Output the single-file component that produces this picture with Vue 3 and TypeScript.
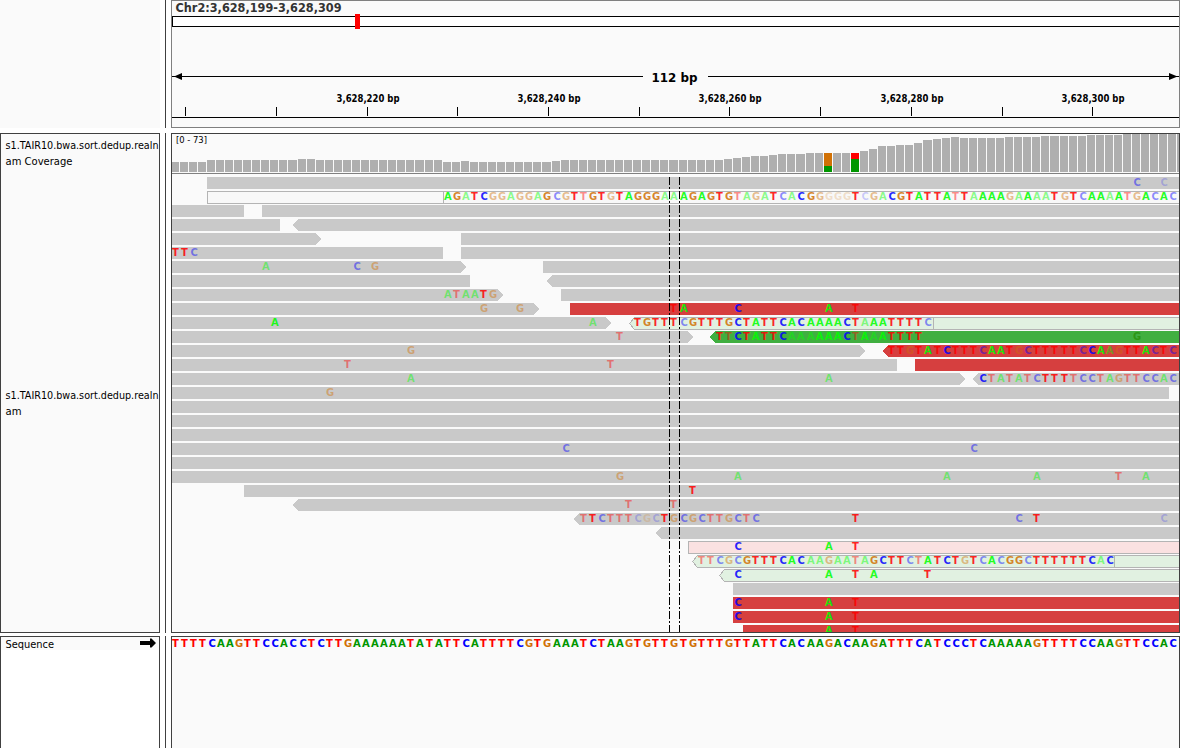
<script setup lang="ts">
type Tone = 'gray' | 'red' | 'green' | 'paleRed' | 'paleGreen' | 'blank'
type Cap = 'left' | 'right' | 'none'

interface Segment {
  from: number
  to: number
  tone: Tone
  cap: Cap
  divider?: number
}

interface BaseRun {
  start: number
  bases: string
  quality: string
}

interface ReadRow {
  segments: Segment[]
  runs: BaseRun[]
}

const LEFT = 171
const RIGHT = 1179
const BASE_WIDTH = 9.072

const seg = (from: number, to: number, tone: Tone = 'gray', cap: Cap = 'none', divider?: number): Segment => ({
  from, to, tone, cap, divider,
})
const run = (start: number, bases: string, quality: string): BaseRun => ({ start, bases, quality })
const row = (segments: Segment[], runs: BaseRun[] = []): ReadRow => ({ segments, runs })

const baseX = (index: number): number => Math.floor(LEFT + index * BASE_WIDTH)

const toneFill: Record<Tone, string> = {
  gray: '#c9c9c9',
  red: '#d63f3f',
  green: '#40af40',
  paleRed: '#fae1e1',
  paleGreen: '#e1f1e1',
  blank: '#f8f8f8',
}
const isOutlined = (tone: Tone): boolean => tone === 'paleRed' || tone === 'paleGreen' || tone === 'blank'

/* Read rows from top to bottom; long mismatch stretches are split every ten bases. */
const rows: ReadRow[] = [
  row([seg(207, RIGHT)], [run(106, 'C', '2'), run(109, 'C', '1')]),
  row([seg(207, RIGHT + 4, 'blank', 'none', 443)], [
    run(30, 'AGATCGGAGG', '3323322222'),
    run(40, 'AGCGTTGTGT', '2322323323'),
    run(50, 'AGGGAAAGAG', '3333223333'),
    run(60, 'TGTAGATCAC', '3322223223'),
    run(70, 'GGGGGTCGAC', '3211131223'),
    run(80, 'GTATTATTAA', '3333332323'),
    run(90, 'AAGAAAATGT', '3322322323'),
    run(100, 'CAAAATGACA', '2332322323'),
    run(110, 'C', '2'),
  ]),
  row([seg(172, 244), seg(262, RIGHT)]),
  row([seg(172, 280), seg(293, RIGHT, 'gray', 'left')]),
  row([seg(172, 321, 'gray', 'right'), seg(461, RIGHT)]),
  row([seg(172, 443), seg(461, RIGHT)], [run(0, 'TTC', '332')]),
  row([seg(172, 466, 'gray', 'right'), seg(543, RIGHT)], [run(10, 'A', '2'), run(20, 'C', '2'), run(22, 'G', '2')]),
  row([seg(172, 470), seg(547, RIGHT, 'gray', 'left')]),
  row([seg(172, 503, 'gray', 'right'), seg(561, RIGHT)], [run(30, 'ATAATG', '222232')]),
  row([seg(172, 539, 'gray', 'right'), seg(570, RIGHT, 'red')], [
    run(34, 'G', '2'), run(38, 'G', '2'), run(55, 'TA', '33'), run(62, 'C', '3'), run(72, 'A', '3'), run(75, 'T', '3'),
  ]),
  row([seg(172, 611, 'gray', 'right'), seg(629, RIGHT + 4, 'paleGreen', 'left', 933)], [
    run(11, 'A', '3'), run(46, 'A', '2'),
    run(51, 'TGTTTCGTTT', '3333323333'), run(61, 'GCTATTCACA', '3333333333'),
    run(71, 'AAACTAAATT', '3333323333'), run(81, 'TTC', '332'),
  ]),
  row([seg(172, 693, 'gray', 'right'), seg(710, RIGHT, 'green', 'left')], [
    run(49, 'T', '2'), run(60, 'TTCTATTCAAAAAACTAAATTTT', '32333333222333323233333'), run(106, 'G', '5'),
  ]),
  row([seg(172, 865, 'gray', 'right'), seg(883, RIGHT, 'red', 'left')], [
    run(26, 'G', '2'),
    run(79, 'TTGTATCTTT', '3323333333'), run(89, 'CAATGCTTTT', '2333223333'),
    run(99, 'TCCAAGTTAC', '3233223332'), run(109, 'TC', '32'),
  ]),
  row([seg(172, 897), seg(915, RIGHT, 'red')], [run(19, 'T', '2'), run(48, 'T', '2')]),
  row([seg(172, 965, 'gray', 'right'), seg(973, RIGHT, 'gray', 'left')], [
    run(26, 'A', '2'), run(72, 'A', '2'), run(89, 'CTATATCTTTTCCTAGTTCCAC', '3222222333222222222222'),
  ]),
  row([seg(172, 1169)], [run(17, 'G', '2')]),
  row([seg(172, RIGHT)]),
  row([seg(172, RIGHT)]),
  row([seg(172, RIGHT)]),
  row([seg(172, RIGHT)], [run(43, 'C', '2'), run(88, 'C', '2')]),
  row([seg(172, RIGHT)]),
  row([seg(172, RIGHT)], [
    run(49, 'G', '2'), run(62, 'A', '2'), run(85, 'A', '2'), run(95, 'A', '2'), run(104, 'T', '2'), run(107, 'A', '2'),
  ]),
  row([seg(244, RIGHT)], [run(57, 'T', '3')]),
  row([seg(293, RIGHT, 'gray', 'left')], [run(50, 'T', '2'), run(55, 'T', '2')]),
  row([seg(574, RIGHT, 'gray', 'left')], [
    run(45, 'TTCTTTCGCT', '2322221113'), run(55, 'GCGCTTGCTC', '2222222222'),
    run(75, 'T', '3'), run(93, 'C', '2'), run(95, 'T', '3'), run(109, 'C', '1'),
  ]),
  row([seg(656, RIGHT, 'gray', 'left')]),
  row([seg(688, RIGHT + 4, 'paleRed')], [run(62, 'C', '3'), run(72, 'A', '3'), run(75, 'T', '3')]),
  row([seg(692, RIGHT + 4, 'paleGreen', 'left', 1114)], [
    run(58, 'TTCGCGTTTC', '2222233333'), run(68, 'ACAAGAATAG', '3322222223'),
    run(78, 'CTTCTATCTG', '3332233332'), run(88, 'TCACGGCTTT', '3232332333'), run(98, 'TTTCAC', '333323'),
  ]),
  row([seg(719, RIGHT + 4, 'paleGreen', 'left')], [
    run(62, 'C', '3'), run(72, 'A', '3'), run(75, 'T', '3'), run(77, 'A', '3'), run(83, 'T', '3'),
  ]),
  row([seg(733, RIGHT)]),
  row([seg(733, RIGHT, 'red')], [run(62, 'C', '3'), run(72, 'A', '3'), run(75, 'T', '3')]),
  row([seg(733, RIGHT, 'red')], [run(62, 'C', '3'), run(72, 'A', '3'), run(75, 'T', '3')]),
  row([seg(743, RIGHT, 'red')], [run(72, 'A', '3'), run(75, 'T', '3')]),
]

const rowTop = (index: number): number => 177 + index * 14

function outline(s: Segment, index: number): string {
  const inset = isOutlined(s.tone) ? 0.5 : 0
  const top = rowTop(index) + inset
  const bottom = rowTop(index) + 12 + inset
  const mid = (top + bottom) / 2
  const l = s.from + inset
  const r = s.to
  if (s.cap === 'left') return `${l},${mid} ${l + 5},${top} ${r},${top} ${r},${bottom} ${l + 5},${bottom}`
  if (s.cap === 'right') return `${l},${top} ${r - 5},${top} ${r},${mid} ${r - 5},${bottom} ${l},${bottom}`
  return `${l},${top} ${r},${top} ${r},${bottom} ${l},${bottom}`
}

interface Glyph { x: number; base: string; cls: string }
const glyphs = (runs: BaseRun[]): Glyph[] =>
  runs.flatMap((r) =>
    [...r.bases].map((base, k) => ({
      x: baseX(r.start + k) + (base === 'C' ? 1.5 : 1),
      base,
      cls: `base base-${base} q${r.quality[k]}`,
    })),
  )

/* Coverage bars as [top, number of consecutive bases]. */
const coverageRuns: [number, number][] = [
  [162, 4], [160, 10], [159, 2], [160, 14], [162, 2], [161, 1], [162, 9], [161, 1], [160, 18], [159, 1],
  [158, 1], [157, 1], [156, 2], [155, 1], [154, 3], [153, 6], [151, 1], [149, 1], [146, 2], [145, 2],
  [143, 1], [140, 1], [139, 1], [138, 1], [137, 1], [138, 5], [137, 4], [136, 5], [135, 4], [134, 7],
]
const coverage = coverageRuns
  .flatMap(([top, n]) => Array.from({ length: n }, () => top))
  .map((top, i) => ({ x: baseX(i), top, width: baseX(i + 1) - baseX(i) - 1 }))
const variants = [
  { index: 72, top: 153, split: 166, color: '#d17105' },
  { index: 75, top: 153, split: 159, color: '#ff0000' },
]

const reference =
  'TTTTCAAGTTCCACCTCTTGAAAAAATATATTCATTTTCGTGAAATCTAAGTGTTGTGTTTGTTATTCACAAGACAAGATTTCATCCCTCAAAAAGTTTTCCAAGTTCCAC'
const referenceGlyphs = glyphs([run(0, reference, '4'.repeat(reference.length))])

const ticks = [185, 276, 367, 457, 548, 639, 729, 820, 911, 1002, 1092]
const tickLabels = [
  { x: 336.5, text: '3,628,220 bp' },
  { x: 517.5, text: '3,628,240 bp' },
  { x: 698.5, text: '3,628,260 bp' },
  { x: 880.5, text: '3,628,280 bp' },
  { x: 1061.5, text: '3,628,300 bp' },
]
</script>

<template>
  <main class="viewer">
    <div class="name-head"></div>
    <div class="rail"></div>
    <section class="panel head">
      <svg class="canvas" width="1007" height="126" viewBox="172 1 1007 126">
        <text class="locus" x="175.5" y="12" textLength="166" lengthAdjust="spacingAndGlyphs">Chr2:3,628,199-3,628,309</text>
        <rect class="ideogram" x="172.5" y="16.5" width="1010" height="10" />
        <rect class="marker" x="355" y="14" width="5" height="15" />
        <path class="rule" d="M172 76.5H643M708 76.5H1179M172 117.5H1179" />
        <path d="M174 76.5L182 73V80ZM1177.5 76.5L1169 73V80Z" />
        <text class="span" x="651.5" y="82" textLength="46" lengthAdjust="spacingAndGlyphs">112 bp</text>
        <rect v-for="t in ticks" :key="t" :x="t" y="107" width="1" height="9" />
        <text
          v-for="l in tickLabels"
          :key="l.text"
          class="tick-label"
          :x="l.x"
          y="102"
          textLength="63"
          lengthAdjust="spacingAndGlyphs"
        >{{ l.text }}</text>
      </svg>
    </section>

    <aside class="names">
      <svg class="name" width="158" height="246">
        <text x="4.5" y="15" textLength="153" lengthAdjust="spacingAndGlyphs">s1.TAIR10.bwa.sort.dedup.realn</text>
        <text x="4.5" y="31" textLength="67" lengthAdjust="spacingAndGlyphs">am Coverage</text>
      </svg>
      <svg class="name" width="158" height="60">
        <text x="4.5" y="19" textLength="153" lengthAdjust="spacingAndGlyphs">s1.TAIR10.bwa.sort.dedup.realn</text>
        <text x="4.5" y="35" textLength="16" lengthAdjust="spacingAndGlyphs">am</text>
      </svg>
    </aside>
    <div class="rail"></div>
    <section class="panel">
      <svg class="canvas" width="1007" height="498" viewBox="172 134 1007 498">
        <text class="scale" x="176" y="143" textLength="31" lengthAdjust="spacingAndGlyphs">[0 - 73]</text>
        <g class="bars">
          <rect v-for="b in coverage" :key="b.x" :x="b.x" :y="b.top" :width="b.width" :height="172 - b.top" />
        </g>
        <g v-for="v in variants" :key="v.index">
          <rect :x="baseX(v.index)" :y="v.top" width="8" :height="v.split - v.top" :fill="v.color" />
          <rect :x="baseX(v.index)" :y="v.split" width="8" :height="172 - v.split" fill="#009600" />
        </g>
        <rect class="separator" x="172" y="173" width="1007" height="1" />

        <g v-for="(r, i) in rows" :key="i">
          <template v-for="s in r.segments" :key="s.from">
            <polygon
              :points="outline(s, i)"
              :fill="toneFill[s.tone]"
              :class="{ outlined: isOutlined(s.tone) }"
            />
            <rect v-if="s.divider" class="divider" :x="s.divider" :y="rowTop(i)" width="1" height="12" />
          </template>
        </g>
        <g v-for="(r, i) in rows" :key="'b' + i">
          <text v-for="g in glyphs(r.runs)" :key="g.x" :class="g.cls" :x="g.x" :y="rowTop(i) + 9">{{ g.base }}</text>
        </g>
        <path class="guide" d="M669.5 177V632M679.5 177V632" />
      </svg>
    </section>

    <aside class="names sequence-names">
      <svg class="name sequence-name" width="158" height="13">
        <text x="4.5" y="11" textLength="48.5" lengthAdjust="spacingAndGlyphs">Sequence</text>
        <path d="M139 4H149V1.500H150.500L155 6L150.500 10.500H149V8H139Z" />
      </svg>
    </aside>
    <div class="rail"></div>
    <section class="panel sequence">
      <svg class="canvas" width="1007" height="111" viewBox="172 637 1007 111">
        <text v-for="g in referenceGlyphs" :key="g.x" :class="g.cls" :x="g.x" y="647">{{ g.base }}</text>
      </svg>
    </section>
  </main>
</template>

<style>
html,
body {
  margin: 0;
  background: #ffffff;
  overflow: hidden;
}
</style>

<style scoped>
.viewer {
  display: grid;
  grid-template-columns: 160px 1px 1009px;
  grid-template-rows: 128px 5px 500px 3px 112px;
  column-gap: 5px;
  width: 1199px;
  height: 748px;
  font-family: 'DejaVu Sans', sans-serif;
  color: #000000;
}

.viewer > :nth-child(n + 4) {
  grid-row: 3;
}

.viewer > :nth-child(n + 7) {
  grid-row: 5;
}

.name-head {
  background: #fafafa;
}

.rail {
  background: #404040;
}

.panel {
  box-sizing: border-box;
  border: 1px solid #404040;
  background: #fafafa;
  overflow: hidden;
}

.panel.head {
  border-color: #808080;
}

.panel.sequence {
  border-bottom: 0;
}

.canvas {
  display: block;
}

.canvas rect,
.canvas polygon {
  shape-rendering: crispEdges;
}

.names {
  box-sizing: border-box;
  border: 1px solid #404040;
  background: #fafafa;
  overflow: hidden;
}

.sequence-names {
  border-bottom: 0;
  background: #ffffff;
}

.name {
  display: block;
  font-size: 10px;
}

.sequence-name {
  background: #fafafa;
}

.locus {
  font-size: 12px;
  font-weight: bold;
  fill: #333333;
}

.span {
  font-size: 13px;
  font-weight: bold;
}

.tick-label {
  font-size: 10px;
  font-weight: bold;
}

.scale {
  font-size: 8.5px;
}

.ideogram {
  fill: #ffffff;
  stroke: #000000;
}

.marker {
  fill: #ff0000;
}

.rule {
  fill: none;
  stroke: #000000;
}

.bars {
  fill: #afafaf;
}

.separator {
  fill: #808080;
}

.outlined {
  stroke: #b4b4b4;
}

.divider {
  fill: #b4b4b4;
}

.guide {
  fill: none;
  stroke: #000000;
  stroke-dasharray: 8 2 2 2;
}

.base {
  font-size: 10px;
  font-weight: bold;
}

.base-A {
  fill: #00ff00;
}

.base-C {
  fill: #0000ff;
}

.base-G {
  fill: #d17105;
}

.base-T {
  fill: #ff0000;
}

.base-A.q4 {
  fill: #009600;
}

.base-G.q5 {
  fill: #2d9614;
}

.q3 {
  fill-opacity: 0.85;
}

.q2 {
  fill-opacity: 0.45;
}

.q1 {
  fill-opacity: 0.2;
}
</style>
